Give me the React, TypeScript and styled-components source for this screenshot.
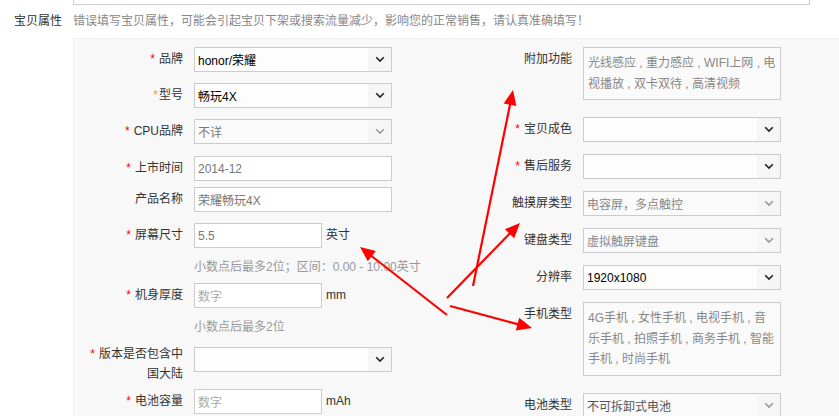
import React from "react";
import styled, { createGlobalStyle } from "styled-components";

const Global = createGlobalStyle`
  html, body { margin: 0; padding: 0; background: #fff; }
  body {
    font-family: "Liberation Sans", "Noto Sans CJK SC", sans-serif;
    font-size: 12px;
    color: #333;
    width: 839px;
    height: 416px;
    overflow: hidden;
  }
`;

const Page = styled.div`
  position: relative;
  width: 839px;
  height: 416px;
  overflow: hidden;
`;

const TopBox = styled.div`
  margin-left: 73px;
  width: 737px;
  height: 5px;
  box-sizing: border-box;
  border: 1px solid #ccc;
  border-top: none;
  background: #fff;
`;

const Header = styled.div`
  display: flex;
  margin-top: 6px;
  line-height: 20px;
  height: 20px;
`;

const HeaderLabel = styled.div`
  width: 59px;
  padding-left: 14px;
  box-sizing: content-box;
  color: #333;
`;

const HeaderHint = styled.div`
  color: #888;
  white-space: nowrap;
`;

const Panel = styled.div`
  margin-top: 7px;
  margin-left: 73px;
  background: #f8f8f8;
  border-top: 1px solid #eee;
  border-left: 1px solid #eee;
  display: flex;
  padding-top: 8px;
  height: 400px;
`;

const LeftCol = styled.div`
  width: 390px;
  display: flex;
  flex-direction: column;
`;

const RightCol = styled.div`
  flex: 1;
  display: flex;
  flex-direction: column;
`;

const Row = styled.div<{ $mb?: number }>`
  display: flex;
  align-items: flex-start;
  margin-bottom: ${(p) => p.$mb ?? 11}px;
`;

const Label = styled.div<{ $w: number; $mt?: number }>`
  width: ${(p) => p.$w}px;
  margin-right: 11px;
  text-align: right;
  line-height: 20px;
  padding-top: 2px;
  margin-top: ${(p) => p.$mt ?? 0}px;
  color: #333;
  flex-shrink: 0;
`;

const LabelLine = styled.div`
  white-space: nowrap;
`;

const Star = styled.span<{ $orange?: boolean; $tight?: boolean }>`
  color: ${(p) => (p.$orange ? "#f7931e" : "#f00")};
  margin-right: ${(p) => (p.$tight ? 1 : 4)}px;
`;

const SelectBox = styled.div<{ $muted?: boolean; $w?: number }>`
  width: ${(p) => p.$w ?? 198}px;
  height: 25px;
  box-sizing: border-box;
  border: 1px solid #ccc;
  background: ${(p) => (p.$muted ? "#fafafa" : "#fdfdfd")};
  display: flex;
  align-items: center;
  color: ${(p) => (p.$muted ? "#888" : "#000")};
  white-space: nowrap;
`;

const SelectText = styled.div`
  flex: 1;
  padding-left: 3px;
  overflow: hidden;
`;

const Chevron = styled.div`
  width: 23px;
  height: 100%;
  background: #f6f6f6;
  display: flex;
  align-items: center;
  justify-content: center;
`;

const TextInput = styled.div<{ $w?: number; $placeholder?: boolean }>`
  width: ${(p) => p.$w ?? 198}px;
  height: 25px;
  box-sizing: border-box;
  border: 1px solid #ccc;
  background: #fff;
  padding-left: 3px;
  display: flex;
  align-items: center;
  color: ${(p) => (p.$placeholder ? "#aaa" : "#777")};
`;

const Unit = styled.div`
  margin-left: 4px;
  line-height: 20px;
  padding-top: 2px;
  color: #333;
`;

const Hint = styled.div<{ $mt: number; $mb: number }>`
  padding-left: 120px;
  margin-top: ${(p) => p.$mt}px;
  margin-bottom: ${(p) => p.$mb}px;
  line-height: 20px;
  color: #999;
  white-space: nowrap;
`;

const Area = styled.div<{ $h: number }>`
  width: 198px;
  height: ${(p) => p.$h}px;
  box-sizing: border-box;
  border: 1px solid #ccc;
  background: #fafafa;
  padding: 5px 4px;
  color: #888;
  line-height: 20.5px;
`;

const AreaLine = styled.div`
  white-space: nowrap;
`;

const Arrows = styled.svg`
  position: absolute;
  left: 0;
  top: 0;
  pointer-events: none;
`;

function Chev({ muted }: { muted?: boolean }) {
  return (
    <svg width="10" height="7" viewBox="0 0 10 7">
      <polyline
        points="1.2,1.2 5,5 8.8,1.2"
        fill="none"
        stroke={muted ? "#999" : "#222"}
        strokeWidth="1.6"
      />
    </svg>
  );
}

function Select({ text, muted, textColor }: { text?: string; muted?: boolean; textColor?: string }) {
  return (
    <SelectBox $muted={muted}>
      <SelectText style={textColor ? { color: textColor } : undefined}>{text}</SelectText>
      <Chevron>
        <Chev muted={muted} />
      </Chevron>
    </SelectBox>
  );
}

type ArrowDef = [number, number, number, number];
const arrowData: ArrowDef[] = [
  [473, 286, 513, 90],
  [447, 298, 520, 223],
  [447, 315, 360, 247],
  [450, 306, 532, 328],
];

function ArrowLayer() {
  return (
    <Arrows width="839" height="416" viewBox="0 0 839 416">
      {arrowData.map(([x1, y1, x2, y2], i) => {
        const dx = x2 - x1;
        const dy = y2 - y1;
        const len = Math.hypot(dx, dy);
        const ux = dx / len;
        const uy = dy / len;
        const hl = 15;
        const hw = 6.5;
        const bx = x2 - ux * hl;
        const by = y2 - uy * hl;
        const px = -uy;
        const py = ux;
        return (
          <g key={i}>
            <line x1={x1} y1={y1} x2={bx + ux * 2} y2={by + uy * 2} stroke="#f00" strokeWidth="2.2" />
            <polygon
              points={`${x2},${y2} ${bx + px * hw},${by + py * hw} ${bx - px * hw},${by - py * hw}`}
              fill="#f00"
            />
          </g>
        );
      })}
    </Arrows>
  );
}

export default function App() {
  return (
    <>
      <Global />
      <Page>
        <TopBox />
        <Header>
          <HeaderLabel>宝贝属性</HeaderLabel>
          <HeaderHint>错误填写宝贝属性，可能会引起宝贝下架或搜索流量减少，影响您的正常销售，请认真准确填写！</HeaderHint>
        </Header>
        <Panel>
          <LeftCol>
            <Row $mb={11}>
              <Label $w={109}>
                <Star>*</Star>品牌
              </Label>
              <Select text="honor/荣耀" />
            </Row>
            <Row $mb={11}>
              <Label $w={109}>
                <Star $orange $tight>*</Star>型号
              </Label>
              <Select text="畅玩4X" />
            </Row>
            <Row $mb={12}>
              <Label $w={109}>
                <Star>*</Star>CPU品牌
              </Label>
              <Select text="不详" muted textColor="#777" />
            </Row>
            <Row $mb={6}>
              <Label $w={109}>
                <Star>*</Star>上市时间
              </Label>
              <TextInput>2014-12</TextInput>
            </Row>
            <Row $mb={11}>
              <Label $w={109}>产品名称</Label>
              <TextInput>荣耀畅玩4X</TextInput>
            </Row>
            <Row $mb={0}>
              <Label $w={109}>
                <Star>*</Star>屏幕尺寸
              </Label>
              <TextInput $w={128}>5.5</TextInput>
              <Unit>英寸</Unit>
            </Row>
            <Hint $mt={9} $mb={6}>小数点后最多2位；区间：0.00 - 10.00英寸</Hint>
            <Row $mb={0}>
              <Label $w={109}>
                <Star>*</Star>机身厚度
              </Label>
              <TextInput $w={128} $placeholder>数字</TextInput>
              <Unit>mm</Unit>
            </Row>
            <Hint $mt={9} $mb={10}>小数点后最多2位</Hint>
            <Row $mb={5}>
              <Label $w={109} $mt={-5}>
                <LabelLine>
                  <Star>*</Star>版本是否包含中
                </LabelLine>
                <LabelLine>国大陆</LabelLine>
              </Label>
              <Select />
            </Row>
            <Row $mb={0}>
              <Label $w={109}>
                <Star>*</Star>电池容量
              </Label>
              <TextInput $w={128} $placeholder>数字</TextInput>
              <Unit>mAh</Unit>
            </Row>
          </LeftCol>
          <RightCol>
            <Row $mb={17}>
              <Label $w={108}>附加功能</Label>
              <Area $h={53}>
                <AreaLine>光线感应 , 重力感应 , WIFI上网 , 电</AreaLine>
                <AreaLine>视播放 , 双卡双待 , 高清视频</AreaLine>
              </Area>
            </Row>
            <Row $mb={12}>
              <Label $w={108}>
                <Star>*</Star>宝贝成色
              </Label>
              <Select />
            </Row>
            <Row $mb={12}>
              <Label $w={108}>
                <Star>*</Star>售后服务
              </Label>
              <Select />
            </Row>
            <Row $mb={12}>
              <Label $w={108}>触摸屏类型</Label>
              <Select text="电容屏，多点触控" muted />
            </Row>
            <Row $mb={12}>
              <Label $w={108}>键盘类型</Label>
              <Select text="虚拟触屏键盘" muted />
            </Row>
            <Row $mb={12}>
              <Label $w={108}>分辨率</Label>
              <Select text="1920x1080" />
            </Row>
            <Row $mb={17}>
              <Label $w={108}>手机类型</Label>
              <Area $h={74}>
                <AreaLine>4G手机 , 女性手机 , 电视手机 , 音</AreaLine>
                <AreaLine>乐手机 , 拍照手机 , 商务手机 , 智能</AreaLine>
                <AreaLine>手机 , 时尚手机</AreaLine>
              </Area>
            </Row>
            <Row $mb={0}>
              <Label $w={108}>电池类型</Label>
              <Select text="不可拆卸式电池" muted textColor="#555" />
            </Row>
          </RightCol>
        </Panel>
        <ArrowLayer />
      </Page>
    </>
  );
}
